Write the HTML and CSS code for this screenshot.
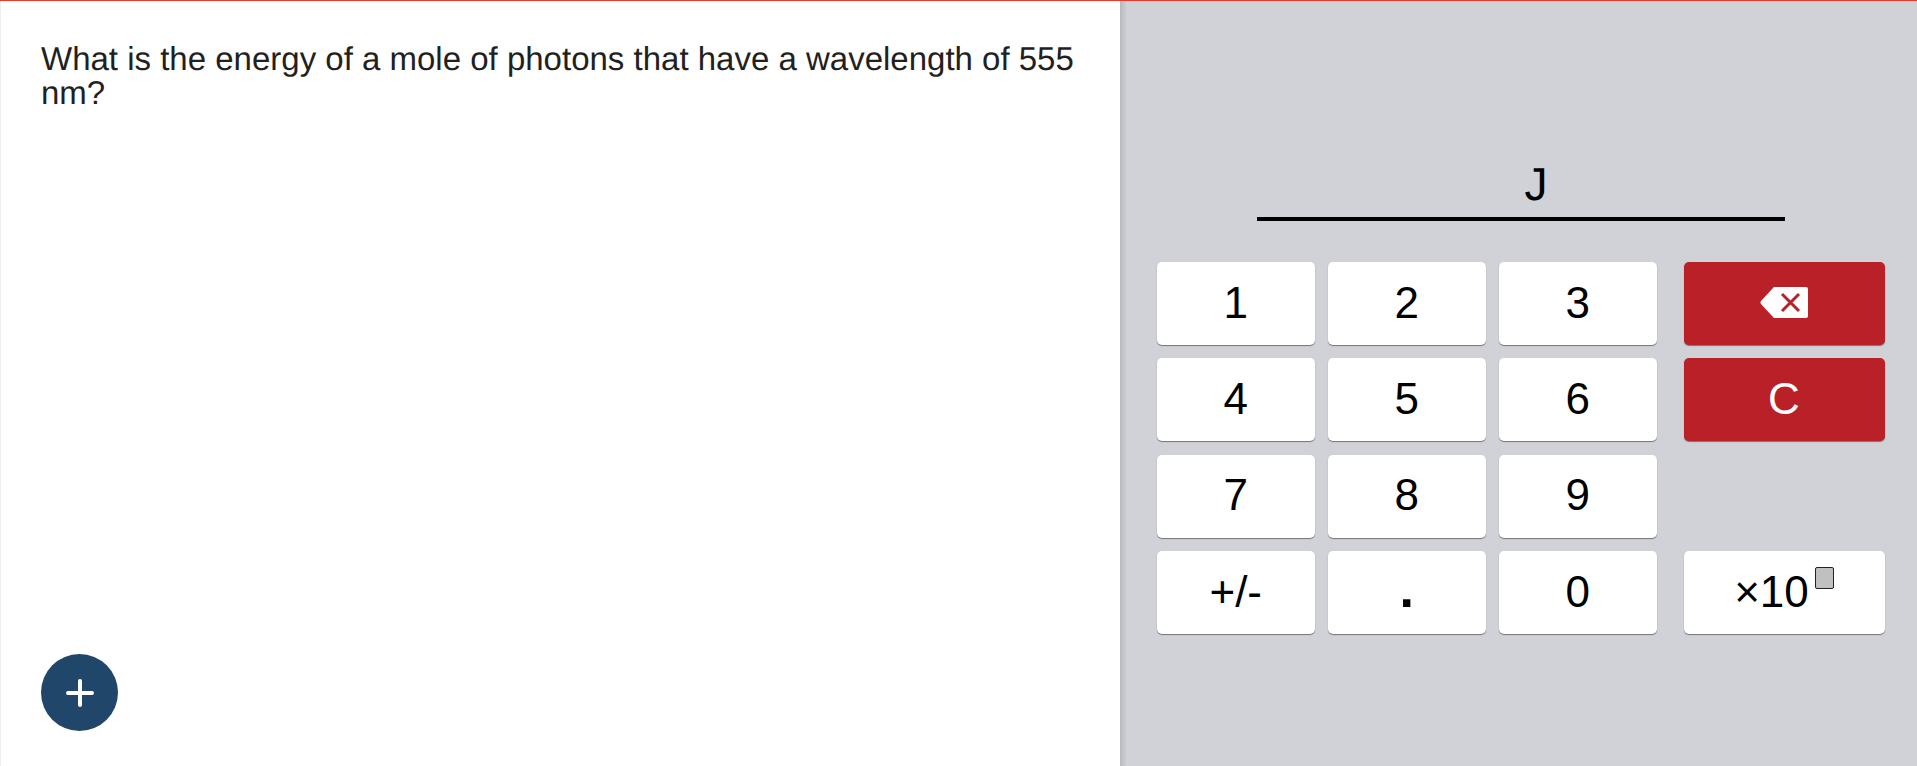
FILE: index.html
```html
<!DOCTYPE html>
<html>

<head>
    <link rel="stylesheet" href="styles.css">
</head>

<body>
    <div class="screen">
        <div class="question">
            <p class="questionText">What is the energy of a mole of photons that have a wavelength of 555 nm?</p>
            <button class="addButton" type="button">
                <svg width="28" height="28" viewBox="0 0 28 28">
                    <path d="M14 2V26M2 14H26" stroke="#fff" stroke-width="4" stroke-linecap="round" fill="none" />
                </svg>
            </button>
        </div>
        <div class="calculator">
            <div class="answerLine"><span class="unit">J</span></div>
            <div class="keypad">
                <div class="digits">
                    <button class="key" type="button">1</button>
                    <button class="key" type="button">2</button>
                    <button class="key" type="button">3</button>
                    <button class="key" type="button">4</button>
                    <button class="key" type="button">5</button>
                    <button class="key" type="button">6</button>
                    <button class="key" type="button">7</button>
                    <button class="key" type="button">8</button>
                    <button class="key" type="button">9</button>
                    <button class="key" type="button">+/-</button>
                    <button class="key dot" type="button">.</button>
                    <button class="key" type="button">0</button>
                </div>
                <div class="actions">
                    <button class="key red" type="button">
                        <svg width="48" height="31" viewBox="0 0 48 31">
                            <path d="M15 0H46a2 2 0 0 1 2 2V29a2 2 0 0 1-2 2H15a2 2 0 0 1-2-1L1 17a2.5 2.5 0 0 1 0-3L13 1a2 2 0 0 1 2-1Z" fill="#fff" />
                            <path d="M22 7L39 24M39 7L22 24" stroke="#b92027" stroke-width="3" fill="none" />
                        </svg>
                    </button>
                    <button class="key red" type="button">C</button>
                    <div class="spacer"></div>
                    <button class="key" type="button">×10<span class="exponent"></span></button>
                </div>
            </div>
        </div>
    </div>
</body>

</html>
```

FILE: styles.css
```css
html,
body {
    margin: 0;
    height: 100%;
    overflow: hidden;
}

.screen {
    display: flex;
    height: 766px;
    border-top: 1px solid #e8392a;
    box-sizing: border-box;
    font-family: "Liberation Sans", Arial, sans-serif;
    text-rendering: geometricPrecision;
}

.question {
    position: relative;
    width: 1120px;
    box-sizing: border-box;
    padding: 41px 30px 0 40px;
    background: #fff;
    border-left: 1px solid #eeeeee;
}

.questionText {
    margin: 0;
    font-size: 33px;
    line-height: 34px;
    color: #231f20;
}

.addButton {
    position: absolute;
    left: 40px;
    top: 653px;
    width: 77px;
    height: 77px;
    padding: 0;
    border: none;
    border-radius: 50%;
    background: #204769;
    display: flex;
    align-items: center;
    justify-content: center;
}

.calculator {
    flex: 1;
    padding: 0 32px 0 37px;
    background: linear-gradient(to right, #b9bac0, #d1d2d8 7px);
}

.answerLine {
    width: 528px;
    height: 68px;
    margin: 148px 0 41px 100px;
    border-bottom: 4px solid #000;
    text-align: center;
}

.unit {
    display: inline-block;
    margin-left: 30px;
    padding-top: 3px;
    font-size: 46px;
    line-height: 64px;
    color: #000;
}

.keypad {
    display: flex;
    gap: 27px;
}

.digits {
    display: grid;
    grid-template-columns: repeat(3, 157.5px);
    grid-auto-rows: 83px;
    column-gap: 13.5px;
    row-gap: 13.4px;
}

.actions {
    display: grid;
    grid-template-columns: 201px;
    grid-auto-rows: 83px;
    row-gap: 13.4px;
}

.key {
    display: flex;
    align-items: center;
    justify-content: center;
    padding: 0 0 2px 0;
    border: none;
    border-radius: 5px;
    background: #fff;
    color: #000;
    font-family: inherit;
    font-size: 44px;
    box-shadow: 0 1px 1px rgba(0, 0, 0, 0.45);
}

.dot {
    padding-bottom: 8px;
    font-size: 52px;
    font-weight: bold;
}

.red {
    background: #b92027;
    color: #fff;
}

.exponent {
    display: inline-block;
    width: 17px;
    height: 20px;
    margin: -28px 0 0 6px;
    background: #c0c0c0;
    border: 1px solid #222;
    border-radius: 2px;
}
```
